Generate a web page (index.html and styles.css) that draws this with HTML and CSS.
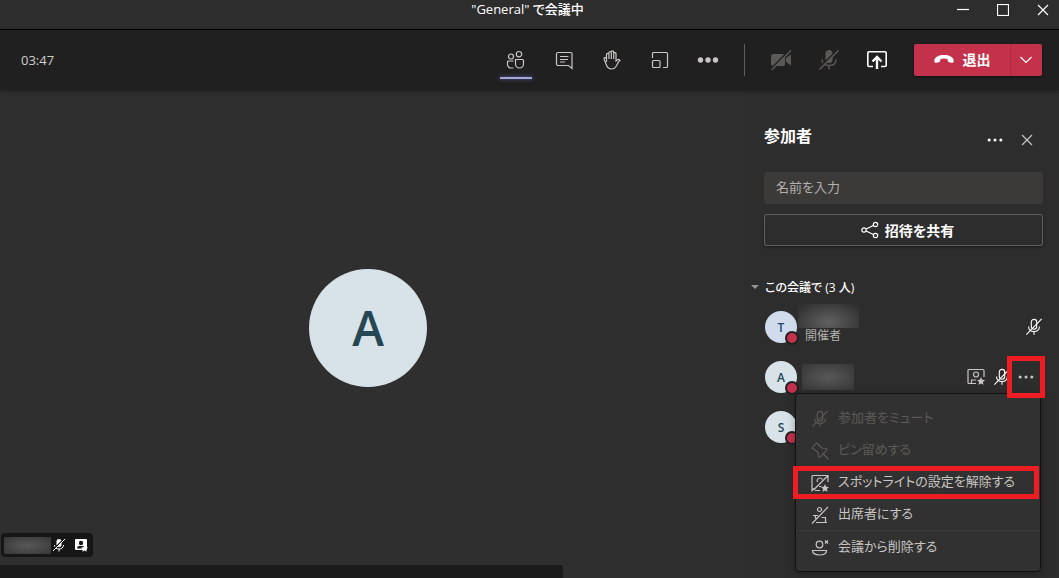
FILE: index.html
```html
<!DOCTYPE html>
<html lang="ja">
<head>
    <meta charset="UTF-8">
    <meta name="viewport" content="width=device-width, initial-scale=1.0">
    <title>"General" で会議中</title>
    <link rel="stylesheet" href="styles.css">
</head>
<body>
    <!-- shared icons -->
    <svg class="sprite" aria-hidden="true">
        <symbol id="mic-off" viewBox="0 0 20 20">
            <rect x="7" y="1.5" width="6" height="11" rx="3"/>
            <path d="M4 9.500c0 3.500 2.500 5.500 6 5.500s6-2 6-5.500M10 15v3.500M18.500 1L1.500 18.500"/>
        </symbol>
        <symbol id="close" viewBox="0 0 12 12">
            <path d="M1 1l10 10M11 1L1 11"/>
        </symbol>
        <symbol id="dots" viewBox="0 0 20 20">
            <circle cx="3.500" cy="10" r="1.700"/>
            <circle cx="10" cy="10" r="1.700"/>
            <circle cx="16.500" cy="10" r="1.700"/>
        </symbol>
        <symbol id="star" viewBox="0 0 10 10">
            <path d="M5 0l1.500 3.300 3.500.4-2.600 2.400.7 3.600L5 8 1.900 9.700l.7-3.600L0 3.700l3.500-.4z"/>
        </symbol>
    </svg>

    <header class="titlebar">
        <span class="window-title">"General" で会議中</span>
        <div class="window-buttons">
            <button aria-label="最小化"><svg class="line" viewBox="0 0 12 12" width="12" height="12"><path d="M0 5.500h12"/></svg></button>
            <button aria-label="最大化"><svg class="line" viewBox="0 0 12 12" width="12" height="12"><rect x=".5" y=".5" width="11" height="11"/></svg></button>
            <button aria-label="閉じる"><svg class="line" width="12" height="12"><use href="#close"/></svg></button>
        </div>
    </header>

    <nav class="toolbar">
        <span class="timer">03:47</span>
        <button class="tool active" aria-label="参加者を表示">
            <svg class="line" viewBox="0 0 20 20" width="20" height="20">
                <circle cx="5" cy="6.500" r="2.500"/><circle cx="13" cy="4.200" r="2.700"/>
                <path d="M7.500 11h-5a1 1 0 0 0-1 1v2.500A3.500 3.500 0 0 0 5 18h2.500M9.500 9.500h7a1 1 0 0 1 1 1v3.500a4 4 0 0 1-8 0V9.500z"/>
            </svg>
        </button>
        <button class="tool" aria-label="会話">
            <svg class="line" viewBox="0 0 20 20" width="20" height="20">
                <path d="M4 2.500h13a1 1 0 0 1 1 1v15L14.500 15.500H4A1.500 1.500 0 0 1 2.500 14V4A1.500 1.500 0 0 1 4 2.500zM6 6.500h8.500M6 9.500h8M6 12h5"/>
            </svg>
        </button>
        <button class="tool" aria-label="手を挙げる">
            <svg class="line" viewBox="0 0 20 20" width="20" height="20">
                <path d="M4.500 12V4.500a1.200 1.200 0 0 1 2.400 0V9 2.700a1.200 1.200 0 0 1 2.400 0V9 2a1.200 1.200 0 0 1 2.400 0v7-5.500a1.200 1.200 0 0 1 2.300 0V11l1.500-1.300c.9-.6 2.200-.2 2.500.6-2 1.500-2.500 3.700-4 6.200-1 1.800-2.200 2.500-4.500 2.500-3.500 0-4.700-2.500-5.500-5L2.100 9c-.5-1.300 1-2 1.800-1l.6 1"/>
            </svg>
        </button>
        <button class="tool" aria-label="ブレークアウト ルーム">
            <svg class="line" viewBox="0 0 20 20" width="20" height="20">
                <path d="M2.500 8V3.500a1 1 0 0 1 1-1h13a1 1 0 0 1 1 1v13a1 1 0 0 1-1 1H13"/>
                <rect x="2.500" y="10.500" width="7.500" height="7" rx="1"/>
            </svg>
        </button>
        <button class="tool" aria-label="その他の操作">
            <svg class="fill" viewBox="0 0 22 20" width="22" height="20">
                <circle cx="3.500" cy="10" r="2.700"/><circle cx="11" cy="10" r="2.700"/><circle cx="18.500" cy="10" r="2.700"/>
            </svg>
        </button>
        <span class="divider"></span>
        <button class="tool off" aria-label="カメラ" disabled>
            <svg viewBox="0 0 22 20" width="22" height="20">
                <path class="solid" d="M3.500 4h9A2.500 2.500 0 0 1 15 6.500v7a2.500 2.500 0 0 1-2.500 2.500h-9A2.500 2.500 0 0 1 1 13.500v-7A2.500 2.500 0 0 1 3.500 4zM16 8l5-3.500v11L16 12z"/>
                <path class="gap" d="M20 0L1 19"/><path class="slash" d="M21 0.500L1.500 20"/>
            </svg>
        </button>
        <button class="tool off" aria-label="マイク" disabled>
            <svg viewBox="0 0 20 20" width="20" height="20">
                <rect class="solid" x="6.500" y="0" width="7" height="13" rx="3.500"/>
                <path class="slash" d="M3 9.500c0 3.500 2.500 6 7 6s7-2.500 7-6M10 15.500v4"/>
                <path class="gap" d="M18.500 0L0 18.500"/><path class="slash" d="M19.500.5L.5 19.500"/>
            </svg>
        </button>
        <button class="tool share" aria-label="コンテンツを共有">
            <svg viewBox="0 0 22 20" width="22" height="20">
                <path class="frame" d="M7 16.500H3A1.200 1.200 0 0 1 1.800 15.300V3A1.200 1.200 0 0 1 3 1.800h16A1.200 1.200 0 0 1 20.200 3v12.300a1.200 1.200 0 0 1-1.200 1.200h-4"/>
                <path class="arrow" d="M11 19V7M6.500 11.500L11 7l4.500 4.500"/>
            </svg>
        </button>
        <div class="leave">
            <button class="leave-main">
                <svg viewBox="0 0 20 10" width="20" height="10"><path fill="#fff" d="M10 1C5 1 .5 3 .3 6.500.2 8.300 1 9 2.500 8.700l2.300-.5c1-.2 1.400-.8 1.500-1.700l.2-1.500c2.200-.8 4.800-.8 7 0l.2 1.500c.1.900.5 1.500 1.500 1.700l2.300.5c1.500.3 2.300-.4 2.200-2.200C19.500 3 15 1 10 1z"/></svg>
                退出
            </button>
            <button class="leave-more" aria-label="退出オプション">
                <svg class="line" viewBox="0 0 12 8" width="12" height="8"><path d="M.5 1L6 6.500 11.500 1"/></svg>
            </button>
        </div>
    </nav>

    <main class="meeting">
        <section class="stage">
            <div class="video">
                <div class="big-avatar">A</div>
            </div>
            <div class="name-tag">
                <span class="redacted tag-name"></span>
                <svg class="tag-mic" viewBox="0 0 14 14" width="14" height="14">
                    <rect x="4.500" y="1" width="5" height="8" rx="2.500" fill="#fff"/>
                    <path class="tag-line" d="M2.500 7c0 2.500 2 4 4.500 4s4.500-1.500 4.500-4M7 11v2.500"/>
                    <path class="tag-gap" d="M12.300.5L.5 12.300"/><path class="tag-line" d="M13 1L1 13"/>
                </svg>
                <svg class="tag-spot" viewBox="0 0 14 14" width="14" height="14">
                    <rect x="1" y="1" width="12" height="11" rx="1" fill="#fff"/>
                    <circle cx="7" cy="5" r="2.200" fill="#161616"/>
                    <path d="M3 10.500C3 8.500 4 8 7 8s4 .5 4 2.500z" fill="#161616"/>
                    <use href="#star" x="7" y="7" width="7" height="7" fill="#fff"/>
                </svg>
            </div>
            <div class="bottom-strip"></div>
        </section>

        <aside class="panel">
            <div class="panel-head">
                <h2>参加者</h2>
                <button class="head-more" aria-label="その他"><svg class="fill" width="18" height="18"><use href="#dots"/></svg></button>
                <button class="head-close" aria-label="閉じる"><svg class="line" width="12" height="12"><use href="#close"/></svg></button>
            </div>
            <input class="search" type="text" placeholder="名前を入力" aria-label="名前を入力">
            <button class="invite">
                <svg class="line" viewBox="0 0 18 18" width="18" height="18">
                    <circle cx="3" cy="9" r="2.200"/><circle cx="14.500" cy="3.500" r="2.200"/><circle cx="14.500" cy="14.500" r="2.200"/>
                    <path d="M5 8l7.500-3.500M5 10l7.500 3.500"/>
                </svg>
                招待を共有
            </button>

            <h3 class="group"><span class="caret"></span>この会議で (3 人)</h3>
            <ul class="people">
                <li class="person">
                    <span class="avatar blue">T<i class="status"></i></span>
                    <div class="info organizer">
                        <span class="redacted name-long"></span>
                        <span class="role">開催者</span>
                    </div>
                    <svg class="line mic" width="18" height="18"><use href="#mic-off"/></svg>
                </li>
                <li class="person selected">
                    <span class="avatar">A<i class="status"></i></span>
                    <div class="info">
                        <span class="redacted name-short"></span>
                    </div>
                    <svg class="line spot" viewBox="0 0 18 18" width="18" height="18">
                        <path d="M9 15.500H2a1 1 0 0 1-1-1v-12a1 1 0 0 1 1-1h14a1 1 0 0 1 1 1V9M9 12H4.500v3.500"/>
                        <circle cx="9" cy="6.500" r="2.500"/>
                        <use class="star" href="#star" x="10" y="9" width="8" height="8"/>
                    </svg>
                    <svg class="line mic" width="18" height="18"><use href="#mic-off"/></svg>
                    <button class="row-more" aria-label="その他のオプション"><svg class="fill" width="18" height="18"><use href="#dots"/></svg></button>

                    <div class="menu" role="menu">
                        <button role="menuitem" disabled>
                            <svg class="line" width="18" height="18"><use href="#mic-off"/></svg>
                            参加者をミュート
                        </button>
                        <button role="menuitem" disabled>
                            <svg class="line" viewBox="0 0 18 18" width="18" height="18">
                                <path d="M6.500 1.500L10.500 6l4.500.5c1 .2 1.300 1 .6 1.700l-6.400 6.600c-.7.700-1.500.4-1.700-.5L7 10 1.800 6.500c-.6-.5-.6-1 0-1.600L5 1.600c.5-.5 1-.6 1.500-.1zM12.500 12l5 5.500"/>
                            </svg>
                            ピン留めする
                        </button>
                        <button role="menuitem" class="marked">
                            <svg class="line" viewBox="0 0 18 18" width="18" height="18">
                                <path d="M3 14.500l-2 2v-14a1 1 0 0 1 1-1h15V8M4 16.500h5M17 1.500L2.500 16M6.500 8c-1-2 .3-4 2.500-4 1.200 0 2 .6 2.400 1.400M8 12.500h2.500"/>
                                <use class="star" href="#star" x="10" y="10" width="8" height="8"/>
                            </svg>
                            スポットライトの設定を解除する
                        </button>
                        <button role="menuitem">
                            <svg class="line" viewBox="0 0 18 18" width="18" height="18">
                                <path d="M17 1L1 17.500M5 16.500h11M14.500 16.500v-5h-4M2 9.500h5M4 9.500l1 3.500"/>
                                <circle cx="8.500" cy="3.500" r="2"/>
                            </svg>
                            出席者にする
                        </button>
                        <hr>
                        <button role="menuitem">
                            <svg class="line" viewBox="0 0 18 18" width="18" height="18">
                                <circle cx="8.500" cy="5.500" r="3.300"/>
                                <path d="M1.500 11.500h14c0 3-3 4.500-7 4.500s-7-1.500-7-4.500zM14 1.500l3 3M17 1.500l-3 3"/>
                            </svg>
                            会議から削除する
                        </button>
                    </div>
                </li>
                <li class="person">
                    <span class="avatar">S<i class="status"></i></span>
                </li>
            </ul>
        </aside>
    </main>
</body>
</html>
```

FILE: styles.css
```css
* {
    box-sizing: border-box;
}
body {
    margin: 0;
    height: 100vh;
    display: flex;
    flex-direction: column;
    overflow: hidden;
    background: #2f2f2f;
    color: #fff;
    font-family: "Open Sans", "Noto Sans CJK JP", sans-serif;
    font-size: 14px;
    font-feature-settings: "palt";
}
button {
    display: flex;
    align-items: center;
    justify-content: center;
    padding: 0;
    border: none;
    background: none;
    color: inherit;
    font: inherit;
    font-feature-settings: inherit;
    cursor: pointer;
}
svg {
    flex: none;
}
.sprite {
    position: absolute;
    width: 0;
    height: 0;
}
.line {
    fill: none;
    stroke: currentColor;
    stroke-width: 1.2;
}
.fill, .star {
    fill: currentColor;
    stroke: none;
}

/* title bar */
.titlebar {
    flex: none;
    display: grid;
    grid-template-columns: 1fr auto 1fr;
    height: 30px;
    background: #2d2d2d;
    border-bottom: 1px solid #000;
}
.window-title {
    grid-column: 2;
    padding-right: 4px;
    line-height: 18px;
    font-size: 13px;
    font-weight: 500;
}
.window-buttons {
    display: flex;
    justify-content: flex-end;
    height: 20px;
    gap: 16px;
    padding-right: 4px;
}
.window-buttons button {
    width: 24px;
}

/* toolbar */
.toolbar {
    flex: none;
    display: flex;
    align-items: center;
    height: 60px;
    padding: 0 17px 0 21px;
    background: #202020;
    box-shadow: 0 1px 4px rgba(0, 0, 0, 0.4);
    z-index: 1;
}
.timer {
    margin-right: auto;
    font-size: 13px;
    color: #d0cecc;
}
.tool {
    position: relative;
    width: 48px;
    height: 60px;
    color: #c8c6c4;
}
.tool.active::after {
    content: "";
    position: absolute;
    bottom: 11px;
    width: 32px;
    height: 2px;
    background: #a6a7dc;
    box-shadow: 0 0 4px #6264a7;
}
.divider {
    width: 1px;
    height: 32px;
    margin: 0 12px;
    background: #605e5c;
}
.solid {
    fill: #5c5a58;
}
.slash {
    fill: none;
    stroke: #5c5a58;
    stroke-width: 1.4;
}
.gap {
    stroke: #202020;
    stroke-width: 2;
}
.frame {
    fill: none;
    stroke: #fff;
    stroke-width: 1.6;
}
.arrow {
    fill: none;
    stroke: #fff;
    stroke-width: 2.4;
}
.leave {
    display: flex;
    height: 32px;
    margin-left: 13px;
    border-radius: 2px;
    background: #c4314b;
    box-shadow: 0 1px 3px rgba(0, 0, 0, 0.5);
}
.leave-main {
    width: 96px;
    gap: 9px;
    padding-bottom: 2px;
    font-weight: bold;
}
.leave-more {
    width: 32px;
    padding-right: 2px;
    border-left: 1px solid #ab2b42;
}

/* stage */
.meeting {
    flex: 1;
    min-height: 0;
    display: flex;
}
.stage {
    position: relative;
    flex: 1;
    display: flex;
    flex-direction: column;
}
.video {
    flex: 1;
    display: flex;
    align-items: center;
    justify-content: center;
    padding-right: 8px;
}
.big-avatar {
    display: flex;
    align-items: center;
    justify-content: center;
    width: 118px;
    height: 118px;
    border-radius: 50%;
    background: #d7e3e8;
    color: #264653;
    font-size: 48px;
    font-weight: 600;
}
.bottom-strip {
    width: 563px;
    max-width: 100%;
    height: 13px;
    background: #1b1b1b;
}
.name-tag {
    position: absolute;
    left: 1px;
    bottom: 21px;
    display: flex;
    align-items: center;
    height: 24px;
    padding: 0 5px 0 3px;
    border-radius: 4px;
    background: #161616;
}
.tag-mic {
    margin: 0 8px 0 1px;
}
.tag-line {
    fill: none;
    stroke: #fff;
}
.tag-gap {
    stroke: #161616;
    stroke-width: 1.2;
}
.redacted {
    display: block;
    background: radial-gradient(ellipse, #585858, #363636);
}
.tag-name {
    width: 47px;
    height: 17px;
}

/* participants panel */
.panel {
    flex: none;
    width: 315px;
    padding: 30px 16px 0 20px;
    background: #2d2d2d;
}
.panel-head {
    display: flex;
    align-items: center;
    height: 32px;
    margin-bottom: 20px;
}
.panel-head h2 {
    margin: 0 auto 0 0;
    font-size: 16px;
    line-height: 32px;
}
.head-more, .head-close {
    width: 32px;
    height: 32px;
    padding-top: 8px;
}
.head-close {
    color: #c8c6c4;
}
.search {
    display: block;
    width: 100%;
    height: 32px;
    padding: 0 12px 2px;
    border: none;
    border-radius: 3px;
    background: #3b3a39;
    color: #fff;
    font: inherit;
    font-size: 13px;
}
.search::placeholder {
    color: #b3b0ad;
}
.invite {
    width: 100%;
    height: 32px;
    margin-top: 10px;
    padding-left: 8px;
    gap: 6px;
    border: 1px solid #605e5c;
    border-radius: 2px;
    font-weight: bold;
    box-shadow: 0 1px 3px rgba(0, 0, 0, 0.4);
}
.group {
    display: flex;
    align-items: center;
    gap: 6px;
    height: 20px;
    margin: 31px 0 5px -13px;
    font-size: 12px;
    font-weight: 500;
}
.caret {
    border: 4px solid transparent;
    border-top-color: #979593;
    border-bottom: none;
}
.people {
    margin: 0;
    padding: 0;
    list-style: none;
}
.person {
    position: relative;
    display: flex;
    align-items: center;
    height: 50px;
    padding-left: 1px;
}
.avatar {
    position: relative;
    display: flex;
    align-items: center;
    justify-content: center;
    width: 32px;
    height: 32px;
    border-radius: 50%;
    background: #d7e3e8;
    color: #264653;
    font-size: 12px;
    font-weight: 600;
}
.avatar.blue {
    background: #d0dcec;
    color: #26466d;
}
.status {
    position: absolute;
    right: -2px;
    bottom: -2px;
    width: 14px;
    height: 14px;
    border: 2px solid #202020;
    border-radius: 50%;
    background: #c4314b;
}
.info {
    flex: 1;
    padding-left: 5px;
}
.info.organizer {
    align-self: flex-start;
    padding: 2px 0 0 1px;
}
.name-long {
    width: 61px;
    height: 24px;
    background: radial-gradient(ellipse at 50% 75%, #606060, #303030 90%);
}
.name-short {
    width: 52px;
    height: 26px;
}
.role {
    display: block;
    padding-left: 7px;
    font-size: 12px;
    line-height: 16px;
    color: #b3b0ad;
}
.spot {
    margin-right: 8px;
    color: #c8c6c4;
}
.row-more {
    position: relative;
    width: 32px;
    height: 32px;
    padding-right: 2px;
    color: #c8c6c4;
}
.row-more::after {
    content: "";
    position: absolute;
    inset: -5px -2px -5px -4px;
    border: 5px solid #ee1c23;
    z-index: 3;
}

/* context menu */
.menu {
    position: absolute;
    top: 41px;
    right: 2px;
    width: 246px;
    padding: 8px 0;
    border: 1px solid #111;
    border-radius: 4px;
    background: #323131;
    box-shadow: 0 2px 8px rgba(0, 0, 0, 0.3);
    z-index: 2;
}
.menu button {
    position: relative;
    justify-content: flex-start;
    gap: 9px;
    width: 100%;
    height: 32px;
    padding: 0 0 3px 15px;
    color: #c8c6c4;
    font-size: 13px;
    white-space: nowrap;
}
.menu svg {
    margin-top: 4px;
}
.menu button:disabled {
    color: #5c5a58;
}
.menu hr {
    height: 1px;
    margin: 0;
    border: none;
    background: #3d3c3b;
}
.marked::after {
    content: "";
    position: absolute;
    inset: 0 1px -1px -3px;
    border: 5px solid #ee1c23;
}
```
